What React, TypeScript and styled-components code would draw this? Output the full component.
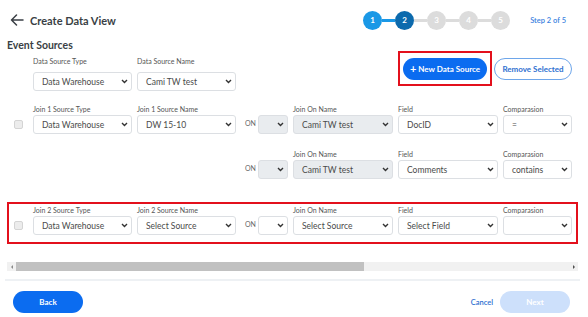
import React from "react";
import styled, { createGlobalStyle } from "styled-components";

const GlobalStyle = createGlobalStyle`
  html, body {
    margin: 0;
    padding: 0;
    background: #ffffff;
  }
  body {
    font-family: "Lato", "Noto Sans", sans-serif;
    color: #333;
  }
`;

const Page = styled.div`
  width: 588px;
  height: 317px;
  overflow: hidden;
  display: flex;
  flex-direction: column;
`;

const Header = styled.header`
  height: 38px;
  display: flex;
  align-items: center;
  justify-content: space-between;
  padding: 2px 22px 0 10px;
  box-sizing: border-box;
`;

const TitleGroup = styled.div`
  display: flex;
  align-items: center;
  gap: 6px;
`;

const Title = styled.h1`
  margin: 0;
  font-size: 11px;
  font-weight: 700;
  color: #3a3f45;
`;

const StepperWrap = styled.div`
  display: flex;
  align-items: center;
  gap: 18px;
`;

const Steps = styled.div`
  display: flex;
  align-items: center;
`;

const StepDot = styled.span<{ $state: "done" | "active" | "todo" }>`
  width: 19px;
  height: 19px;
  border-radius: 50%;
  display: flex;
  align-items: center;
  justify-content: center;
  font-size: 8px;
  font-weight: 700;
  color: #fff;
  background: ${({ $state }) =>
    $state === "done" ? "#1a98e6" : $state === "active" ? "#0c6aad" : "#dcdcdc"};
`;

const StepLine = styled.span<{ $on: boolean }>`
  width: 13px;
  height: 3px;
  background: ${({ $on }) => ($on ? "#1a98e6" : "#dcdcdc")};
`;

const StepText = styled.span`
  font-size: 7.5px;
  font-weight: 600;
  color: #3b82e0;
  margin-left: 2px;
`;

const SectionTitle = styled.h2`
  margin: 0;
  padding-left: 7px;
  font-size: 10.5px;
  line-height: 14px;
  font-weight: 700;
  color: #3a3f45;
`;

const TopRow = styled.div`
  display: flex;
  align-items: flex-start;
  gap: 5px;
  padding: 0 16px 0 33px;
  height: 49px;
`;

const Actions = styled.div`
  margin-left: auto;
  display: flex;
  align-items: center;
  gap: 2px;
  margin-top: -1px;
`;

const Highlight = styled.div`
  border: 2px solid #e3101c;
  padding: 5px 3px 4px 3px;
  display: flex;
`;

const PrimaryButton = styled.button<{ $disabled?: boolean; $w: number }>`
  width: ${({ $w }) => $w}px;
  height: 22px;
  border: none;
  border-radius: 11px;
  background: ${({ $disabled }) => ($disabled ? "#cde0fb" : "#0b6cf0")};
  color: #fff;
  font-family: inherit;
  font-size: 8px;
  font-weight: 700;
  display: flex;
  align-items: center;
  justify-content: center;
  gap: 2px;
  padding: 0;
`;

const Plus = styled.span`
  font-size: 11px;
  line-height: 10px;
  font-weight: 700;
`;

const OutlineButton = styled.button`
  width: 78px;
  height: 22px;
  border: 1px solid #6ea6ea;
  border-radius: 11px;
  background: #fff;
  color: #2e6fd0;
  font-family: inherit;
  font-size: 8px;
  font-weight: 700;
  padding: 0;
`;

const Field = styled.div<{ $w: number; $top?: number }>`
  width: ${({ $w }) => $w}px;
  padding-top: ${({ $top = 0 }) => $top}px;
  display: flex;
  flex-direction: column;
`;

const Label = styled.label<{ $space: number }>`
  font-size: 7px;
  line-height: 10px;
  color: #555;
  margin-bottom: ${({ $space }) => $space}px;
  white-space: nowrap;
`;

const SelectBox = styled.div<{ $disabled?: boolean }>`
  height: 19px;
  box-sizing: border-box;
  border: 1px solid #dcdfe3;
  border-radius: 3px;
  background: ${({ $disabled }) => ($disabled ? "#e9ecef" : "#fff")};
  display: flex;
  align-items: center;
  justify-content: space-between;
  padding: 0 3px 0 8px;
  font-size: 8.5px;
  color: #4a4a4a;
  white-space: nowrap;
`;

const Scroller = styled.div`
  margin-left: 7px;
  width: 571px;
  overflow: hidden;
  padding-bottom: 18px;
`;

const ScrollContent = styled.div`
  width: 907px;
  display: flex;
  flex-direction: column;
`;

const ScrollTrack = styled.div`
  margin: 0 0 8px 7px;
  width: 571px;
  height: 9px;
  background: #f1f1f1;
  display: flex;
  align-items: stretch;
`;

const ScrollArrow = styled.span<{ $dir: "left" | "right" }>`
  width: 9px;
  display: flex;
  align-items: center;
  justify-content: center;

  &::before {
    content: "";
    width: 0;
    height: 0;
    border-top: 2px solid transparent;
    border-bottom: 2px solid transparent;
    ${({ $dir }) =>
      $dir === "left" ? "border-right: 2px solid #8a8a8a;" : "border-left: 2px solid #505050;"}
  }
`;

const ScrollRail = styled.div`
  flex: 1;
  display: flex;
  align-items: stretch;
`;

const ScrollThumb = styled.span<{ $w: number }>`
  width: ${({ $w }) => $w}px;
  background: #c1c1c1;
`;

const JoinRow = styled.div<{ $highlight?: boolean; $top: number }>`
  width: 571px;
  box-sizing: border-box;
  margin-top: ${({ $top }) => $top}px;
  border: 2px solid ${({ $highlight }) => ($highlight ? "#e3101c" : "transparent")};
  padding: 1px 0 7px 0;
  display: grid;
  grid-template-columns: 19px 99px 99px 12px 30px 100px 100px 69px;
  column-gap: 5px;
  align-items: end;
`;

const CheckCell = styled.div`
  height: 19px;
  display: flex;
  align-items: center;
  padding-left: 5px;
`;

const Check = styled.span`
  width: 9px;
  height: 9px;
  box-sizing: border-box;
  border: 1px solid #d4d4d4;
  border-radius: 2px;
  background: #ececec;
`;

const OnCell = styled.div`
  height: 19px;
  display: flex;
  align-items: center;
  padding-left: 4px;
  font-size: 7px;
  color: #666;
  margin-bottom: 2px;
`;

const Divider = styled.hr`
  margin: 0 8px 0 5px;
  border: none;
  height: 2px;
  background: #eef1f4;
`;

const Footer = styled.footer`
  display: flex;
  align-items: center;
  padding: 10px 18px 0 13px;
`;

const FooterRight = styled.div`
  margin-left: auto;
  display: flex;
  align-items: center;
  gap: 7px;
`;

const LinkButton = styled.button`
  border: none;
  background: none;
  padding: 0;
  color: #2e6fd0;
  font-family: inherit;
  font-size: 7.5px;
  font-weight: 600;
`;

const Chevron = () => (
  <svg width="7" height="5" viewBox="0 0 7 5">
    <path d="M1 1l2.5 2.5L6 1" fill="none" stroke="#333" strokeWidth="1.4" />
  </svg>
);

const BackArrow = () => (
  <svg width="14" height="12" viewBox="0 0 14 12">
    <path
      d="M13 6H1.5M6.5 1L1.5 6l5 5"
      fill="none"
      stroke="#3a3f45"
      strokeWidth="1.5"
      strokeLinecap="round"
      strokeLinejoin="round"
    />
  </svg>
);

type SelectProps = { value?: string; disabled?: boolean };

const Select = ({ value = "", disabled }: SelectProps) => (
  <SelectBox $disabled={disabled}>
    <span>{value}</span>
    <Chevron />
  </SelectBox>
);

type FieldProps = {
  label: string;
  value?: string;
  w: number;
  space?: number;
  top?: number;
  disabled?: boolean;
};

const SelectField = ({ label, value, w, space = 1, top = 0, disabled }: FieldProps) => (
  <Field $w={w} $top={top}>
    <Label $space={space}>{label}</Label>
    <Select value={value} disabled={disabled} />
  </Field>
);

type JoinProps = {
  n?: number;
  typeValue?: string;
  nameValue?: string;
  joinOn: string;
  joinDisabled?: boolean;
  field: string;
  comparison: string;
  highlight?: boolean;
  top: number;
};

const Join = ({ n, typeValue, nameValue, joinOn, joinDisabled, field, comparison, highlight, top }: JoinProps) => (
  <JoinRow $highlight={highlight} $top={top}>
    {n ? (
      <>
        <CheckCell>
          <Check />
        </CheckCell>
        <SelectField label={`Join ${n} Source Type`} value={typeValue} w={99} />
        <SelectField label={`Join ${n} Source Name`} value={nameValue} w={99} />
      </>
    ) : (
      <>
        <span />
        <span />
        <span />
      </>
    )}
    <OnCell>ON</OnCell>
    <Select disabled={!!joinDisabled} />
    <SelectField label="Join On Name" value={joinOn} w={100} disabled={joinDisabled} />
    <SelectField label="Field" value={field} w={100} />
    <SelectField label="Comparasion" value={comparison} w={69} />
  </JoinRow>
);

const steps = [1, 2, 3, 4, 5];

const VISIBLE = 571;
const CONTENT = 907;
const RAIL = VISIBLE - 18;

export default function App() {
  return (
    <Page>
      <GlobalStyle />
      <Header>
        <TitleGroup>
          <BackArrow />
          <Title>Create Data View</Title>
        </TitleGroup>
        <StepperWrap>
          <Steps>
            {steps.map((s, i) => (
              <React.Fragment key={s}>
                {i > 0 && <StepLine $on={s <= 2} />}
                <StepDot $state={s === 1 ? "done" : s === 2 ? "active" : "todo"}>{s}</StepDot>
              </React.Fragment>
            ))}
          </Steps>
          <StepText>Step 2 of 5</StepText>
        </StepperWrap>
      </Header>

      <SectionTitle>Event Sources</SectionTitle>

      <TopRow>
        <SelectField label="Data Source Type" value="Data Warehouse" w={99} space={6} top={4} />
        <SelectField label="Data Source Name" value="Cami TW test" w={99} space={6} top={4} />
        <Actions>
          <Highlight>
            <PrimaryButton $w={84}>
              <Plus>+</Plus>New Data Source
            </PrimaryButton>
          </Highlight>
          <OutlineButton>Remove Selected</OutlineButton>
        </Actions>
      </TopRow>

      <Scroller>
        <ScrollContent>
          <Join
            n={1}
            top={0}
            typeValue="Data Warehouse"
            nameValue="DW 15-10"
            joinOn="Cami TW test"
            joinDisabled
            field="DocID"
            comparison="="
          />
          <Join top={3} joinOn="Cami TW test" joinDisabled field="Comments" comparison="contains" />
          <Join
            n={2}
            top={14}
            highlight
            typeValue="Data Warehouse"
            nameValue="Select Source"
            joinOn="Select Source"
            field="Select Field"
            comparison=""
          />
        </ScrollContent>
      </Scroller>

      <ScrollTrack>
        <ScrollArrow $dir="left" />
        <ScrollRail>
          <ScrollThumb $w={Math.round((RAIL * VISIBLE) / CONTENT)} />
        </ScrollRail>
        <ScrollArrow $dir="right" />
      </ScrollTrack>

      <Divider />

      <Footer>
        <PrimaryButton $w={70}>Back</PrimaryButton>
        <FooterRight>
          <LinkButton>Cancel</LinkButton>
          <PrimaryButton $w={70} $disabled>
            Next
          </PrimaryButton>
        </FooterRight>
      </Footer>
    </Page>
  );
}
